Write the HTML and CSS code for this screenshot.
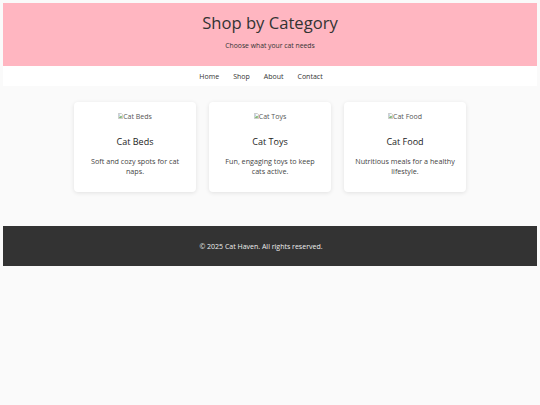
FILE: index.html
```html
<!DOCTYPE html>
<html lang="en">
<head>
<meta charset="utf-8">
<title>Shop by Category</title>
<link rel="stylesheet" href="styles.css">
</head>
<body>
<header class="hero">
  <h1 class="hero-title">Shop by Category</h1>
  <p class="hero-sub">Choose what your cat needs</p>
</header>
<nav class="nav">
  <a href="#">Home</a>
  <a href="#">Shop</a>
  <a href="#">About</a>
  <a href="#">Contact</a>
</nav>
<main class="cards">
  <div class="card">
    <div class="img-alt"><svg class="broken" viewBox="0 0 6 7" width="6" height="7"><path d="M0.5 0.5h3.5l1.5 1.5v4.5h-5z" fill="#fff" stroke="#999" stroke-width="0.6"/><path d="M1 5.5l1.5-2 1 1 1-1.5v2.5z" fill="#5a9e4a"/><circle cx="2" cy="2.2" r="0.6" fill="#4a86c5"/></svg><span>Cat Beds</span></div>
    <h2 class="card-title">Cat Beds</h2>
    <p class="card-text">Soft and cozy spots for cat naps.</p>
  </div>
  <div class="card">
    <div class="img-alt"><svg class="broken" viewBox="0 0 6 7" width="6" height="7"><path d="M0.5 0.5h3.5l1.5 1.5v4.5h-5z" fill="#fff" stroke="#999" stroke-width="0.6"/><path d="M1 5.5l1.5-2 1 1 1-1.5v2.5z" fill="#5a9e4a"/><circle cx="2" cy="2.2" r="0.6" fill="#4a86c5"/></svg><span>Cat Toys</span></div>
    <h2 class="card-title">Cat Toys</h2>
    <p class="card-text">Fun, engaging toys to keep cats active.</p>
  </div>
  <div class="card">
    <div class="img-alt"><svg class="broken" viewBox="0 0 6 7" width="6" height="7"><path d="M0.5 0.5h3.5l1.5 1.5v4.5h-5z" fill="#fff" stroke="#999" stroke-width="0.6"/><path d="M1 5.5l1.5-2 1 1 1-1.5v2.5z" fill="#5a9e4a"/><circle cx="2" cy="2.2" r="0.6" fill="#4a86c5"/></svg><span>Cat Food</span></div>
    <h2 class="card-title">Cat Food</h2>
    <p class="card-text">Nutritious meals for a healthy lifestyle.</p>
  </div>
</main>
<footer class="footer">
  <p>&copy; 2025 Cat Haven. All rights reserved.</p>
</footer>
</body>
</html>
```

FILE: styles.css
```css
html {
  background: #fafafa;
}
body {
  margin: 3.4px;
  font-family: "Open Sans", "DejaVu Sans", sans-serif;
  color: #333;
  background: #fafafa;
}
.hero {
  background: #ffb6c1;
  text-align: center;
  padding: 10px 0 15px;
  display: flex;
  flex-direction: column;
  align-items: center;
}
.hero-title {
  margin: 0;
  font-size: 16.6px;
  line-height: 20px;
  font-weight: 500;
  color: #333;
}
.hero-sub {
  margin: 8px 0 0;
  font-size: 6.8px;
  line-height: 10px;
  color: #333;
}
.nav {
  background: #fff;
  height: 20px;
  display: flex;
  justify-content: center;
  align-items: center;
  gap: 14px;
  padding-right: 18px;
}
.nav a {
  font-size: 7px;
  font-weight: 500;
  color: #333;
  text-decoration: none;
}
.cards {
  display: flex;
  justify-content: center;
  gap: 13px;
  padding: 16px 0 34px;
}
.card {
  width: 122px;
  box-sizing: border-box;
  background: #fff;
  border-radius: 4px;
  box-shadow: 0 1px 4px rgba(0,0,0,0.1);
  padding: 9px 10px 16px;
  text-align: center;
}
.img-alt {
  height: 10px;
  display: flex;
  justify-content: center;
  align-items: center;
  font-size: 7px;
  color: #555;
}
.broken {
  width: 5px;
  height: 6px;
}
.card-title {
  margin: 14px 0 0;
  font-size: 9px;
  line-height: 14px;
  font-weight: 500;
  color: #222;
}
.card-text {
  margin: 7px 0 0;
  font-size: 7.2px;
  line-height: 10px;
  color: #444;
}
.footer {
  background: #333;
  color: #eee;
  height: 40px;
  display: flex;
  align-items: center;
  justify-content: center;
  padding-right: 18px;
}
.footer p {
  margin: 0;
  font-size: 7px;
}
```
